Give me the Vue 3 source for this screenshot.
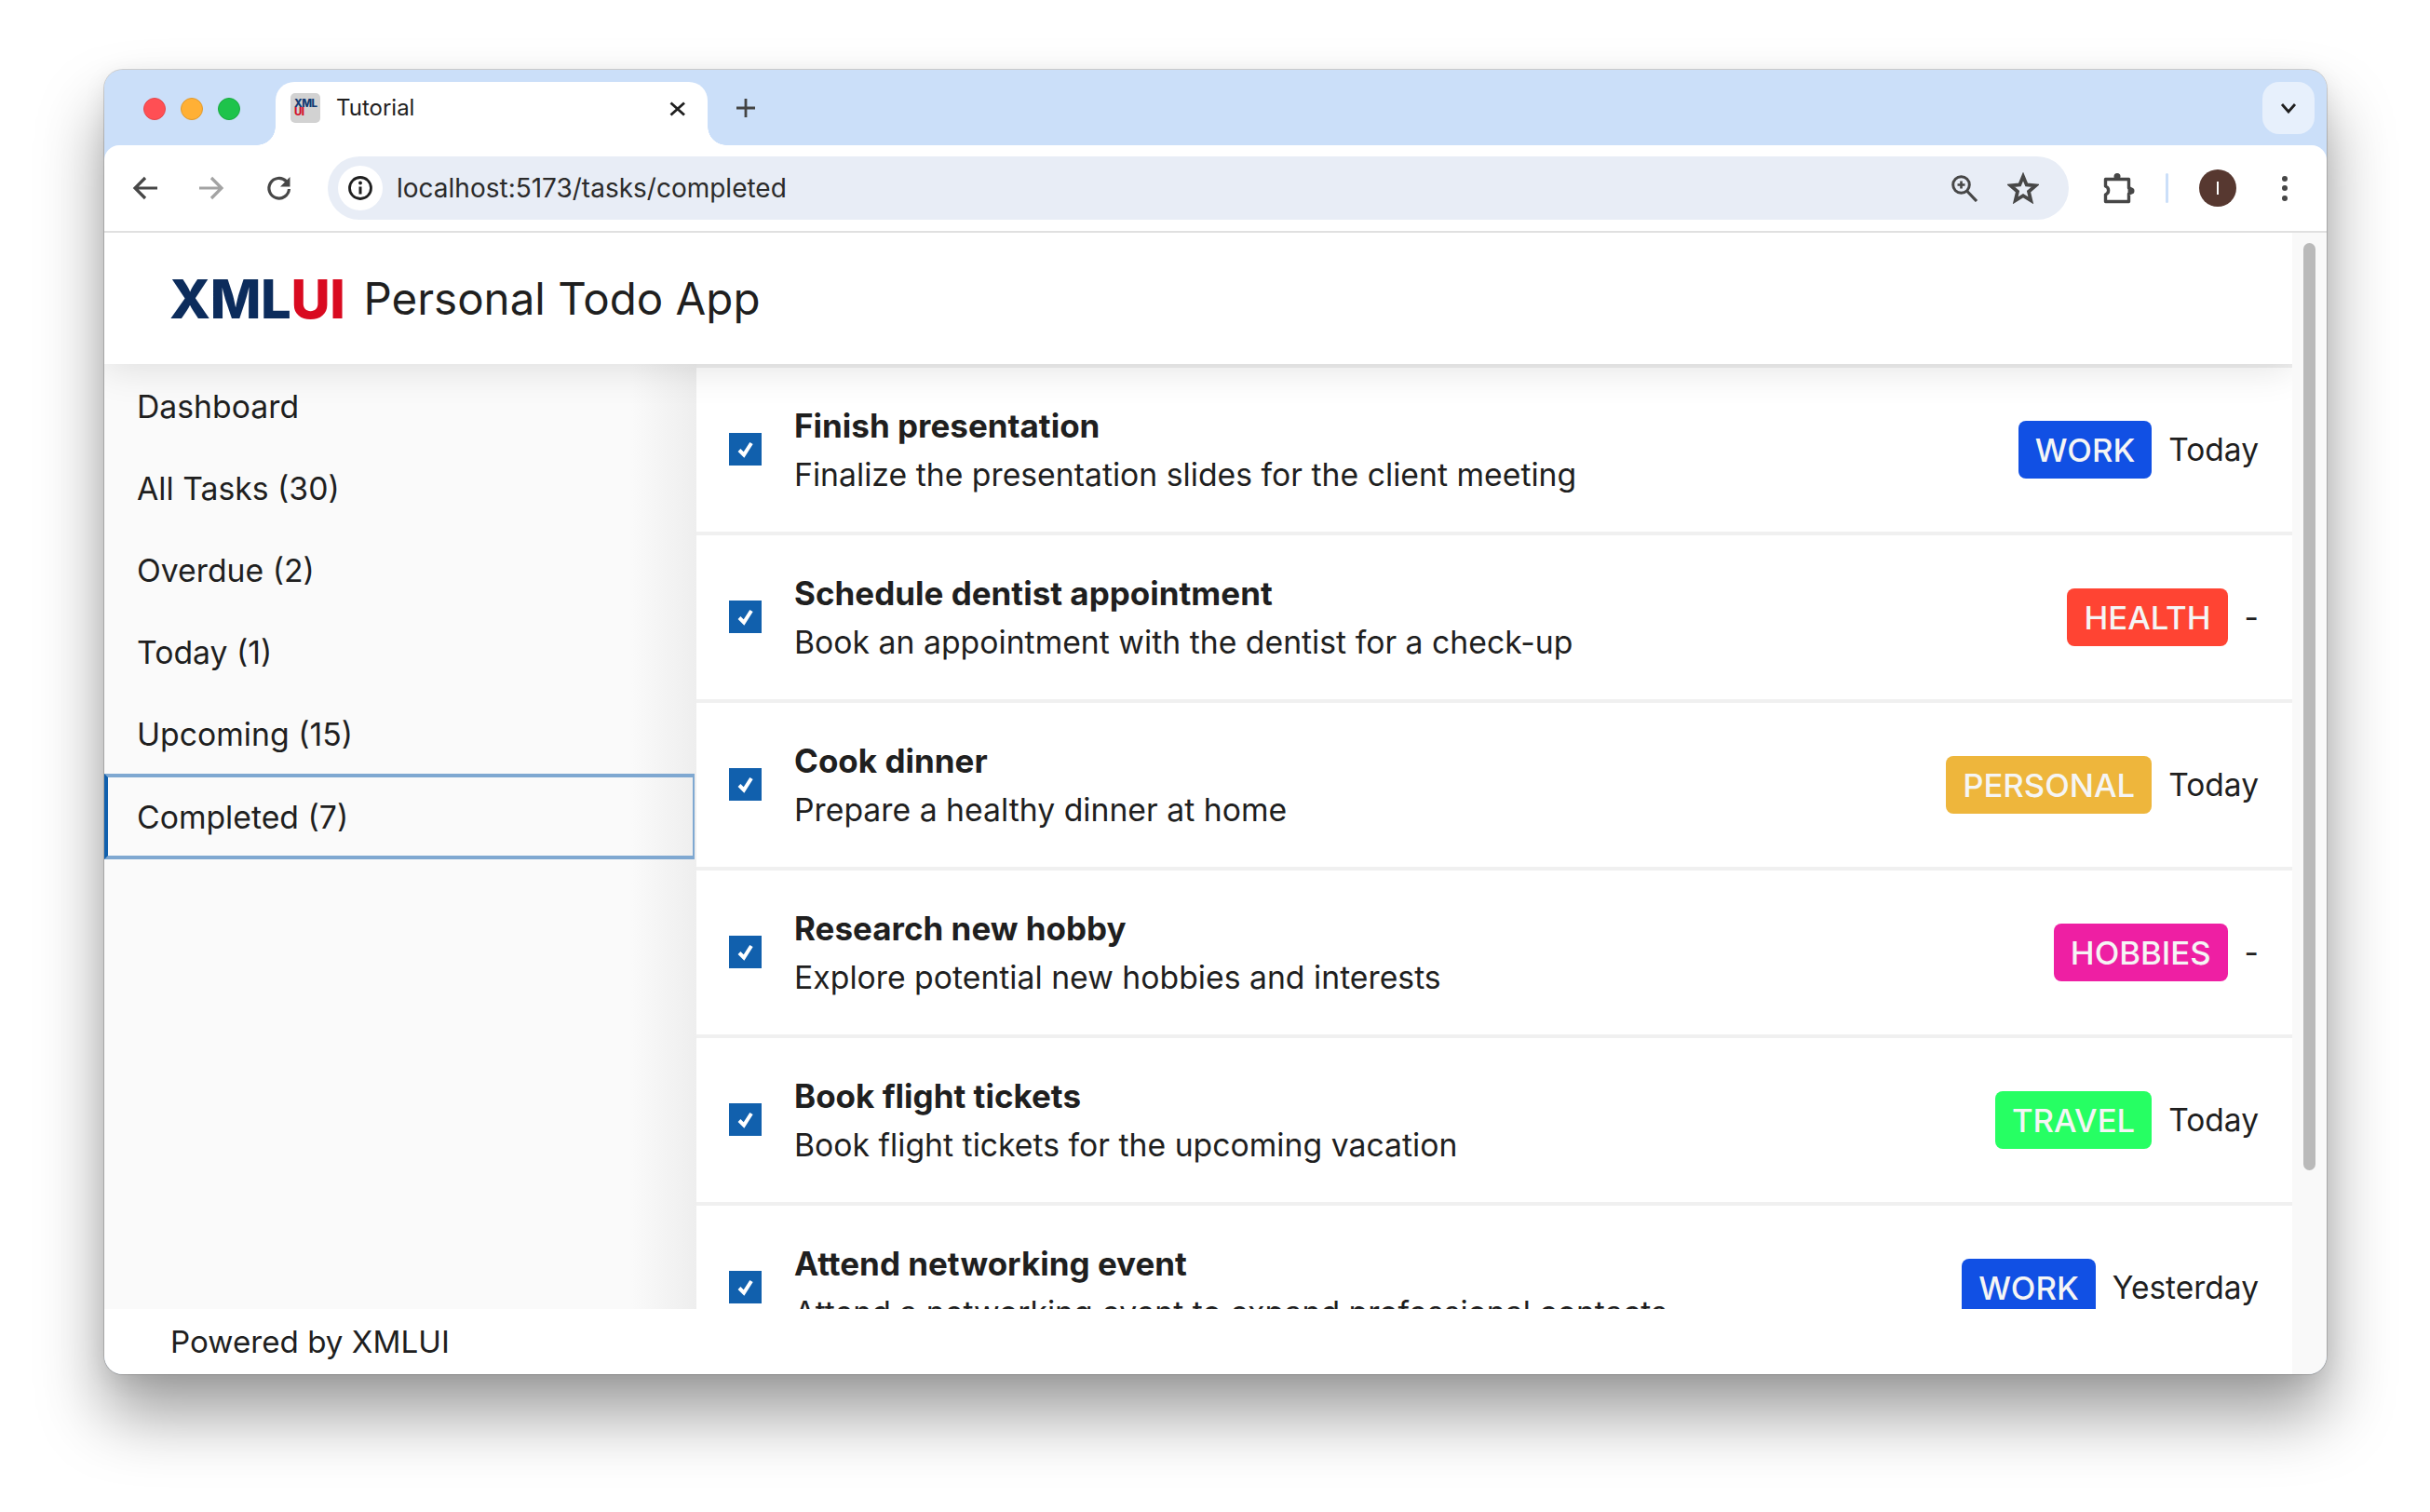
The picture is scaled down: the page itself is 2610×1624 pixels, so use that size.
<template>
  <div class="page">
    <div class="window">
      <div class="tabstrip">
        <div class="lights">
          <span class="light red"></span>
          <span class="light amber"></span>
          <span class="light green"></span>
        </div>
        <div class="tab">
          <div class="favicon"><span class="fav-x">XML</span><span class="fav-u">UI</span></div>
          <span class="tab-title">Tutorial</span>
          <svg class="tab-close" width="20" height="20" viewBox="0 0 20 20">
            <path d="M2.500 3.500 17 16.500M17 3.500 2.500 16.500" stroke="#1f1f1f" stroke-width="2.800" fill="none" />
          </svg>
        </div>
        <svg class="tab-new" width="22" height="22" viewBox="0 0 22 22">
          <path d="M11 1v20M1 11h20" stroke="#444" stroke-width="2.800" fill="none" />
        </svg>
        <div class="tab-menu">
          <svg width="18" height="12" viewBox="0 0 18 12">
            <path d="M2 2l7 8 7-8" stroke="#1f1f1f" stroke-width="2.800" fill="none" />
          </svg>
        </div>
      </div>

      <div class="toolbar">
        <svg class="nav-icon" width="28" height="28" viewBox="0 0 28 28">
          <path d="M27 14H4M14 3 3 14l11 11" stroke="#474747" stroke-width="3.200" fill="none" />
        </svg>
        <svg class="nav-icon" width="28" height="28" viewBox="0 0 28 28">
          <path d="M1 14h22M14 3l11 11-11 11" stroke="#a3a3a3" stroke-width="3.200" fill="none" />
        </svg>
        <svg class="nav-icon" width="28" height="28" viewBox="0 0 28 28">
          <path d="M24.500 15a10.800 10.800 0 1 1-3.200-8.500L24 9.500" stroke="#474747" stroke-width="3.200" fill="none" />
          <path d="M25.500 2v10.500H15z" fill="#474747" />
        </svg>
        <div class="omnibox">
          <div class="site-info">
            <svg width="28" height="28" viewBox="0 0 28 28">
              <circle cx="14" cy="14" r="11.500" stroke="#1f1f1f" stroke-width="2.800" fill="none" />
              <circle cx="14" cy="8.500" r="1.900" fill="#1f1f1f" />
              <path d="M14 12.500v8" stroke="#1f1f1f" stroke-width="3" />
            </svg>
          </div>
          <span class="url">localhost:5173/tasks/completed</span>
          <svg class="omni-zoom" width="30" height="30" viewBox="0 0 30 30">
            <circle cx="11.500" cy="11.500" r="8.800" stroke="#474747" stroke-width="3" fill="none" />
            <path d="M17.500 18 28 29" stroke="#474747" stroke-width="3.200" />
            <path d="M11.500 7.500v8M7.500 11.500h8" stroke="#474747" stroke-width="2.600" />
          </svg>
          <svg class="omni-star" width="34" height="34" viewBox="0 0 34 34">
            <path d="M17 4.500l3.700 9 9.800.8-7.500 6.400 2.300 9.600-8.300-5.100-8.300 5.100 2.300-9.600-7.500-6.400 9.800-.8z" stroke="#474747" stroke-width="3.800" fill="none" />
          </svg>
        </div>
        <svg class="puzzle" width="34" height="34" viewBox="0 0 34 34">
          <path d="M2.500 7.500H27.500V17a3 3 0 0 1 0 6V31.500H2.500V24a4.800 4.800 0 0 0 0-9z" stroke="#474747" stroke-width="3.400" stroke-linejoin="round" fill="none" />
          <circle cx="15" cy="4.500" r="3.500" fill="#474747" />
          <circle cx="30" cy="20" r="3.500" fill="#474747" />
        </svg>
        <span class="divider"></span>
        <div class="avatar"><span></span></div>
        <div class="kebab"><i></i><i></i><i></i></div>
      </div>

      <div class="viewport">
        <div class="app">
          <header class="app-header">
            <div class="logo"><span class="logo-x">XML</span><span class="logo-u">UI</span></div>
            <div class="app-name">Personal Todo App</div>
          </header>
          <div class="app-main">
            <nav class="sidebar">
              <a
                v-for="item in navItems"
                :key="item.label"
                class="nav-item"
                :class="{ active: item.active }"
              >{{ item.label }}</a>
            </nav>
            <div class="tasks">
              <div v-for="task in tasks" :key="task.title" class="task">
                <span class="check">
                  <svg width="19" height="19" viewBox="0 0 19 19">
                    <path d="M3 10.500l5 5L16 3" stroke="#fff" stroke-width="4" fill="none" />
                  </svg>
                </span>
                <div class="task-text">
                  <div class="task-title">{{ task.title }}</div>
                  <div class="task-desc">{{ task.desc }}</div>
                </div>
                <span class="tag" :style="{ background: task.color }">{{ task.tag }}</span>
                <span class="due">{{ task.due }}</span>
              </div>
            </div>
          </div>
          <footer class="app-footer">Powered by XMLUI</footer>
        </div>
        <div class="scrollbar"><div class="thumb"></div></div>
      </div>
    </div>
  </div>
</template>

<script setup>
const navItems = [
  { label: 'Dashboard' },
  { label: 'All Tasks (30)' },
  { label: 'Overdue (2)' },
  { label: 'Today (1)' },
  { label: 'Upcoming (15)' },
  { label: 'Completed (7)', active: true }
]

const tasks = [
  { title: 'Finish presentation', desc: 'Finalize the presentation slides for the client meeting', tag: 'WORK', color: '#1150e4', due: 'Today' },
  { title: 'Schedule dentist appointment', desc: 'Book an appointment with the dentist for a check-up', tag: 'HEALTH', color: '#ff4433', due: '-' },
  { title: 'Cook dinner', desc: 'Prepare a healthy dinner at home', tag: 'PERSONAL', color: '#eeb63c', due: 'Today' },
  { title: 'Research new hobby', desc: 'Explore potential new hobbies and interests', tag: 'HOBBIES', color: '#ee1fa3', due: '-' },
  { title: 'Book flight tickets', desc: 'Book flight tickets for the upcoming vacation', tag: 'TRAVEL', color: '#26ff63', due: 'Today' },
  { title: 'Attend networking event', desc: 'Attend a networking event to expand professional contacts', tag: 'WORK', color: '#1150e4', due: 'Yesterday' }
]
</script>

<style>
html,
body {
  background: #fff;
}
</style>

<style scoped>
.page {
  width: 2610px;
  height: 1624px;
  padding: 75px 0 0 112px;
  box-sizing: border-box;
  overflow: hidden;
  font-family: Inter, "Liberation Sans", sans-serif;
  color: #1f1f1f;
}

.window {
  width: 2387px;
  height: 1401px;
  border-radius: 20px;
  background: #cbdff9;
  overflow: hidden;
  display: flex;
  flex-direction: column;
  box-shadow: 0 0 0 1px rgba(0, 0, 0, 0.16), 0 44px 70px rgba(0, 0, 0, 0.38), 0 6px 24px rgba(0, 0, 0, 0.08);
}

/* TAB STRIP */
.tabstrip {
  height: 81px;
  flex: none;
  background: #cbdff9;
  display: flex;
  align-items: flex-start;
  position: relative;
}
.lights {
  display: flex;
  gap: 16px;
  padding: 30px 0 0 42px;
  width: 184px;
  box-sizing: border-box;
}
.light {
  width: 24px;
  height: 24px;
  border-radius: 50%;
  box-sizing: border-box;
}
.red { background: #ff4f54; border: 1px solid #e5474a; }
.amber { background: #ffb035; border: 1px solid #e09a2e; }
.green { background: #1ec34b; border: 1px solid #19a93f; }

.tab {
  margin-top: 13px;
  width: 464px;
  height: 68px;
  background: #fff;
  border-radius: 20px 20px 0 0;
  display: flex;
  align-items: flex-start;
  padding: 12px 22px 0 16px;
  box-sizing: border-box;
  position: relative;
}
.tab::before,
.tab::after {
  content: "";
  position: absolute;
  bottom: 0;
  width: 20px;
  height: 20px;
}
.tab::before {
  left: -20px;
  background: radial-gradient(circle at 0 0, #cbdff9 19.500px, #fff 20px);
}
.tab::after {
  right: -20px;
  background: radial-gradient(circle at 100% 0, #cbdff9 19.500px, #fff 20px);
}
.favicon {
  width: 32px;
  height: 32px;
  border-radius: 5px;
  background: #d2d2d2;
  display: flex;
  flex-direction: column;
  padding: 7px 0 0 4px;
  box-sizing: border-box;
  font-weight: 800;
  font-size: 11.500px;
  line-height: 9px;
  letter-spacing: -0.6px;
}
.fav-x { color: #123b73; }
.fav-u { color: #d2112b; }
.tab-title {
  margin-left: 17px;
  font-size: 24px;
  line-height: 32px;
  flex: 1;
}
.tab-close {
  margin-top: 7px;
}
.tab-new {
  margin: 30px 0 0 30px;
}
.tab-menu {
  position: absolute;
  top: 13px;
  right: 13px;
  width: 56px;
  height: 56px;
  border-radius: 18px;
  background: #e7f0fc;
  display: flex;
  align-items: center;
  justify-content: center;
}

/* TOOLBAR */
.toolbar {
  height: 92px;
  flex: none;
  background: #fff;
  border-radius: 16px 16px 0 0;
  border-bottom: 2px solid #e0e0e0;
  display: flex;
  align-items: center;
  padding-left: 30px;
}
.nav-icon {
  flex: none;
  margin-right: 43px;
}
.nav-icon:nth-child(2) {
  margin-right: 45px;
}
.nav-icon:nth-child(3) {
  margin-right: 38px;
}
.omnibox {
  width: 1870px;
  height: 68px;
  border-radius: 34px;
  background: #e8edf6;
  display: flex;
  align-items: center;
  padding-left: 11px;
  box-sizing: border-box;
  flex: none;
}
.site-info {
  width: 48px;
  height: 48px;
  border-radius: 50%;
  background: #fff;
  display: flex;
  align-items: center;
  justify-content: center;
  flex: none;
}
.url {
  margin-left: 15px;
  font-size: 28px;
  color: #2b2b2b;
  flex: 1;
}
.omni-star {
  margin: 0 32px 0 31px;
}
.puzzle {
  margin-left: 37px;
  flex: none;
}
.divider {
  width: 3px;
  height: 32px;
  border-radius: 2px;
  background: #cbdff9;
  margin-left: 33px;
  flex: none;
}
.avatar {
  width: 40px;
  height: 40px;
  border-radius: 50%;
  background: #573830;
  margin-left: 33px;
  display: flex;
  align-items: center;
  justify-content: center;
  flex: none;
}
.avatar span {
  width: 2px;
  height: 14px;
  background: #fff;
}
.kebab {
  margin-left: 49px;
  display: flex;
  flex-direction: column;
  gap: 4.500px;
}
.kebab i {
  display: block;
  width: 6px;
  height: 6px;
  border-radius: 50%;
  background: #474747;
}

/* APP */
.viewport {
  flex: 1;
  min-height: 0;
  display: flex;
  overflow: hidden;
}
.app {
  flex: 1;
  min-width: 0;
  display: flex;
  flex-direction: column;
  overflow: hidden;
}
.app-header {
  height: 141px;
  flex: none;
  display: flex;
  align-items: center;
  padding-left: 70px;
  gap: 20px;
  background: #fff;
  position: relative;
  z-index: 2;
  box-shadow: 0 4px 40px rgba(0, 0, 0, 0.12);
}
.logo {
  font-size: 58px;
  font-weight: 800;
  letter-spacing: -0.4px;
}
.logo-x { color: #0c2c5c; }
.logo-u { color: #d90a20; }
.app-name {
  font-size: 47.500px;
  color: #1f1f1f;
}
.app-main {
  flex: 1;
  min-height: 0;
  display: flex;
  overflow: hidden;
}
.sidebar {
  width: 636px;
  flex: none;
  background: linear-gradient(to right, #fafafa 89%, #eeeeee 100%);
  display: flex;
  flex-direction: column;
}
.nav-item {
  height: 88px;
  flex: none;
  display: flex;
  align-items: center;
  padding: 3px 0 0 35px;
  font-size: 33.750px;
  box-sizing: border-box;
}
.nav-item.active {
  height: 92px;
  width: 634px;
  padding: 0 0 0 31px;
  border: solid #7fa8d1;
  border-width: 4px 2px 4px 4px;
  border-left-color: #1160ad;
}
.tasks {
  flex: 1;
  min-width: 0;
  padding-top: 4px;
  background: #f0f0f0;
  display: flex;
  flex-direction: column;
  gap: 4px;
}
.task {
  height: 176px;
  flex: none;
  background: #fff;
  display: flex;
  align-items: center;
  padding: 0 36px 1px 35px;
  box-sizing: border-box;
}
.check {
  width: 35px;
  height: 35px;
  flex: none;
  background: #1160ad;
  display: flex;
  align-items: center;
  justify-content: center;
}
.task-text {
  flex: 1;
  margin-left: 35px;
  min-width: 0;
  padding-top: 2px;
}
.task-title {
  font-size: 35px;
  font-weight: 700;
  line-height: 52px;
}
.task-desc {
  font-size: 33.750px;
  line-height: 54px;
}
.tag {
  height: 62px;
  line-height: 62px;
  padding: 0 18px;
  border-radius: 8px;
  font-size: 34.700px;
  font-weight: 500;
  color: #f5f5f5;
  flex: none;
  margin-bottom: -1px;
}
.due {
  margin-left: 18px;
  font-size: 33.500px;
  flex: none;
}
.app-footer {
  height: 70px;
  flex: none;
  background: #fff;
  display: flex;
  align-items: center;
  padding-left: 71px;
  font-size: 33.200px;
  position: relative;
  z-index: 2;
}
.scrollbar {
  width: 37px;
  flex: none;
  background: #f9f9f9;
  display: flex;
  justify-content: center;
  padding-top: 11px;
  box-sizing: border-box;
}
.thumb {
  width: 13px;
  height: 996px;
  border-radius: 7px;
  background: #bababa;
}
</style>
